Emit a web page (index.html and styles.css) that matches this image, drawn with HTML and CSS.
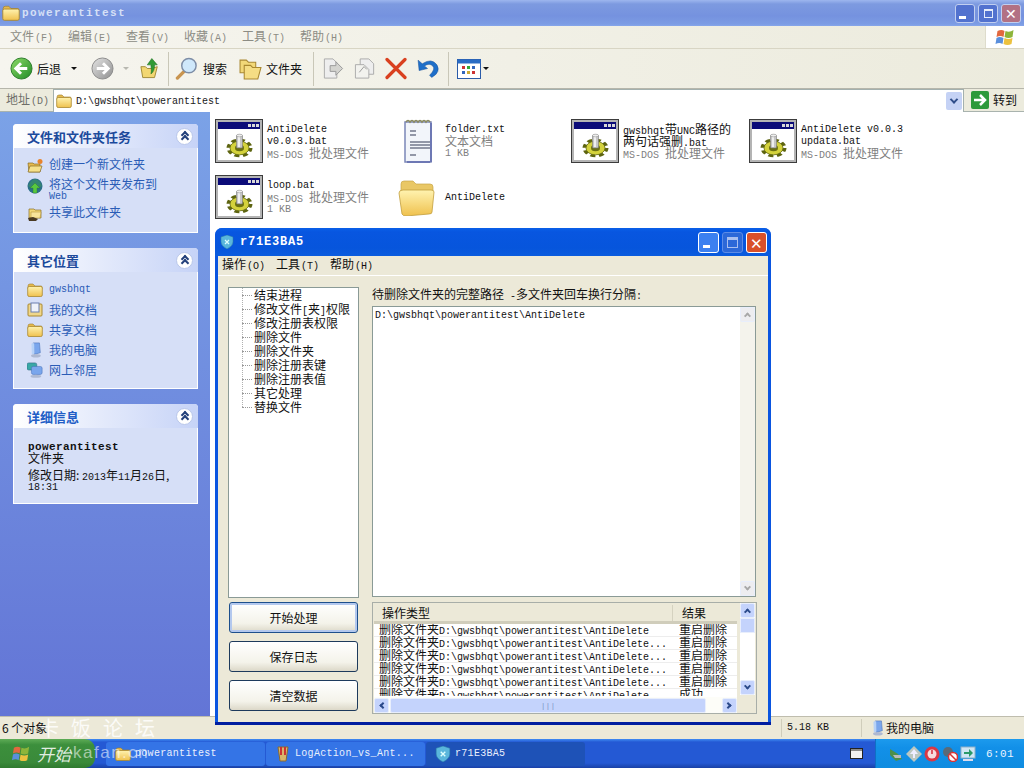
FILE: index.html
```html
<!DOCTYPE html>
<html lang="zh">
<head>
<meta charset="utf-8">
<title>powerantitest</title>
<link rel="stylesheet" href="styles.css">
</head>
<body>
<svg class="defs" aria-hidden="true">
  <defs>
    <linearGradient id="gGreen" x1="0" y1="0" x2="1" y2="1"><stop offset="0" stop-color="#8fdc6a"/><stop offset="1" stop-color="#1f8a25"/></linearGradient>
    <linearGradient id="gGrey" x1="0" y1="0" x2="1" y2="1"><stop offset="0" stop-color="#e4e4e4"/><stop offset="1" stop-color="#8f8f8f"/></linearGradient>
    <linearGradient id="gFold" x1="0" y1="0" x2="0" y2="1"><stop offset="0" stop-color="#fff3b0"/><stop offset="1" stop-color="#efc14e"/></linearGradient>
  </defs>
  <symbol id="bat" viewBox="0 0 48 44">
    <rect width="48" height="44" fill="#3c3c3c"/>
    <rect x="1" y="1" width="46" height="42" fill="#b4b4b4"/>
    <rect x="3" y="3" width="42" height="38" fill="#fff"/>
    <rect x="3" y="3" width="42" height="7" fill="#0b0b78"/>
    <rect x="33" y="5" width="3" height="3" fill="#d8d8d8"/><rect x="37" y="5" width="3" height="3" fill="#d8d8d8"/><rect x="41" y="5" width="3" height="3" fill="#d8d8d8"/>
    <g transform="translate(24.500 29) scale(1 .72)">
      <circle r="11" fill="none" stroke="#5d6410" stroke-width="4" stroke-dasharray="5 3.640"/>
      <circle r="9.500" fill="#d4d23c" stroke="#6a7012" stroke-width="1"/>
      <circle r="4.500" fill="#6a7012"/>
    </g>
    <rect x="21.500" y="16" width="6" height="13" rx="1" fill="#c6c6c6" stroke="#777" stroke-width=".6"/>
    <rect x="23" y="17" width="2" height="11" fill="#eee"/>
    <ellipse cx="24.500" cy="16.500" rx="3" ry="1.300" fill="#eee" stroke="#888" stroke-width=".5"/>
  </symbol>
  <symbol id="txt" viewBox="0 0 32 44">
    <path d="M3 3h26v40H3z" fill="#f2f5fa" stroke="#7b86b8" stroke-width="1.500"/>
    <path d="M29 4v39M28 43H5" stroke="#6d78b4" stroke-width="2" fill="none"/>
    <path d="M4 3q2-3 4 0q2-3 4 0q2-3 4 0q2-3 4 0q2-3 4 0q2-3 4 0" fill="none" stroke="#8a8a60" stroke-width="1.600"/>
    <path d="M8 12h6M8 16h6M8 23h20M8 26h20M8 29h20M8 36h6" stroke="#333b55" stroke-width="1.200"/>
  </symbol>
  <symbol id="bigfold" viewBox="0 0 38 38">
    <path d="M3 6q0-3 3-3h9l3 3h14q3 0 3 3v4H3z" fill="#e9c765" stroke="#c8a648" stroke-width=".7"/>
    <path d="M5 12h28q3 0 3 2l-2 20q0 2-3 2l-23 2q-3 0-4-2L1 15q0-3 4-3z" fill="url(#gFold)" stroke="#c29e3e" stroke-width=".8"/>
  </symbol>
  <symbol id="fold" viewBox="0 0 16 14">
    <path d="M1 3q0-2 2-2h3l2 2h6q1 0 1 1v2H1z" fill="#e5b94d" stroke="#9d7d2c" stroke-width=".6"/>
    <rect x=".7" y="3.500" width="14.600" height="10" rx="1.500" fill="url(#gFold)" stroke="#a98830" stroke-width=".8"/>
  </symbol>
  <symbol id="pc" viewBox="0 0 16 18">
    <path d="M6 1h7l1 11-7 2z" fill="#7aa6ec" stroke="#456fb8" stroke-width=".6"/>
    <path d="M4 2l3-1 .5 12-3 1z" fill="#b7d2f7"/>
    <ellipse cx="9" cy="15.500" rx="5.500" ry="2" fill="#aeb9d2"/>
  </symbol>
  <symbol id="net" viewBox="0 0 18 18">
    <rect x="0" y="1" width="11" height="8" rx="2" fill="#39a8a6" stroke="#23627e" stroke-width=".6"/>
    <rect x="5" y="5" width="12" height="9" rx="2" fill="#7aa6ec" stroke="#456fb8" stroke-width=".6"/>
    <ellipse cx="10" cy="16" rx="6" ry="1.700" fill="#aeb9d2"/>
  </symbol>
  <symbol id="shield" viewBox="0 0 14 14">
    <path d="M7 0l6 2v5q0 4-6 7Q1 11 1 7V2z" fill="#5ab6dc" stroke="#2a7aa5" stroke-width=".5"/>
    <path d="M5 5l4 4M9 5l-4 4" stroke="#dff" stroke-width="1.200"/>
  </symbol>
  <symbol id="flag" viewBox="0 0 20 20">
    <path d="M2 4q4-2 7 0l-1 6q-3-2-7 0z" fill="#e2683f"/>
    <path d="M10 4q4 2 8-1l-1 7q-4 2-8 0z" fill="#8db53a"/>
    <path d="M1 11q3-2 7 0l-1 6q-3-2-7 0z" fill="#5a8fdc"/>
    <path d="M9 11q4 2 8 0l-1 6q-4 2-8 0z" fill="#ecc13f"/>
  </symbol>
</svg>

<div class="explorer">
  <header class="xp-title">
    <svg class="title-ico"><use href="#fold"/></svg>
    <span class="xp-title-text">powerantitest</span>
    <div class="caption">
      <span class="cap cap-blue"><i class="g-min"></i></span>
      <span class="cap cap-blue"><i class="g-restore"></i></span>
      <span class="cap cap-red">✕</span>
    </div>
  </header>

  <nav class="xp-menu">
    <span class="mi">文件<span class="ac">(F)</span></span>
    <span class="mi">编辑<span class="ac">(E)</span></span>
    <span class="mi">查看<span class="ac">(V)</span></span>
    <span class="mi">收藏<span class="ac">(A)</span></span>
    <span class="mi">工具<span class="ac">(T)</span></span>
    <span class="mi">帮助<span class="ac">(H)</span></span>
    <span class="flagbox"><svg class="flag-ico"><use href="#flag"/></svg></span>
  </nav>

  <div class="toolbar">
    <svg class="tb t-back" viewBox="0 0 24 24"><circle cx="12" cy="12" r="11" fill="url(#gGreen)" stroke="#2a7a2a"/><path d="M18 12H7M11.500 6.500L6 12l5.500 5.500" fill="none" stroke="#fff" stroke-width="3"/></svg>
    <span class="tb-label l-back">后退</span><span class="drop d-back"></span>
    <svg class="tb t-fwd" viewBox="0 0 24 24"><circle cx="12" cy="12" r="11" fill="url(#gGrey)" stroke="#8a8a8a"/><path d="M6 12h11M12.500 6.500L18 12l-5.500 5.500" fill="none" stroke="#fff" stroke-width="3"/></svg>
    <span class="drop d-fwd"></span>
    <svg class="tb t-up" viewBox="0 0 22 24"><path d="M1 10h5l2 2h5l6-2-3 12H3z" fill="#f2d772" stroke="#9a8430"/><path d="M13 1l6 7h-3c0 5-1 8-4 10 1-4 0-7 0-10H8z" fill="#2f9a35" stroke="#1f6e1f" stroke-width=".6"/></svg>
    <span class="sep s1"></span>
    <svg class="tb t-search" viewBox="0 0 24 24"><path d="M9 15l-7 7" stroke="#c99550" stroke-width="3.500" stroke-linecap="round"/><circle cx="14" cy="9" r="7.500" fill="#cfe8fb" stroke="#7d8da6" stroke-width="1.500"/></svg>
    <span class="tb-label l-search">搜索</span>
    <svg class="tb t-folder" viewBox="0 0 22 22"><path d="M1 3h6l2 2h7v10H1z" fill="#f2d878" stroke="#a98830"/><path d="M5 8h6l2 2h8l-3 11H5z" fill="#f5dd84" stroke="#a98830"/></svg>
    <span class="tb-label l-folder">文件夹</span>
    <span class="sep s2"></span>
    <svg class="tb t-move" viewBox="0 0 22 24"><path d="M2 2h9l4 4v16H2z" fill="#eee" stroke="#aaa"/><path d="M8 9h6V5l7 7-7 7v-4H8z" fill="#d4d4d0" stroke="#999"/></svg>
    <svg class="tb t-copy" viewBox="0 0 24 24"><path d="M7 2h9l5 5v11H7z" fill="#eee" stroke="#aaa"/><path d="M2 8h9l5 5v9H2z" fill="#f2f2ee" stroke="#aaa"/><path d="M6 16l5-6 3 3" stroke="#999" fill="none"/></svg>
    <svg class="tb t-del" viewBox="0 0 22 22"><path d="M2 2l18 18M20 2L2 20" stroke="#d9401f" stroke-width="3.200" stroke-linecap="round"/></svg>
    <svg class="tb t-undo" viewBox="0 0 22 22"><path d="M2 3l1 10 8-2-3-2.500q5-3 8 0t-3 9l2 2q9-5 5-12-5-7-14-1z" fill="#1e6fc9" stroke="#16509a" stroke-width=".5"/></svg>
    <span class="sep s3"></span>
    <svg class="tb t-views" viewBox="0 0 24 20"><rect x=".5" y=".5" width="23" height="19" fill="#fff" stroke="#2a5ba8"/><rect x=".5" y=".5" width="23" height="4" fill="#2a6cc4"/><path d="M5 7h3v3H5z" fill="#c33"/><path d="M10 7h3v3h-3z" fill="#3a3"/><path d="M15 7h3v3h-3z" fill="#36b"/><path d="M5 12h3v3H5z" fill="#36b"/><path d="M10 12h3v3h-3z" fill="#ca3"/><path d="M15 12h3v3h-3z" fill="#c33"/></svg>
    <span class="drop d-views"></span>
  </div>

  <div class="addr">
    <span class="addr-label">地址<span class="ac">(D)</span></span>
    <div class="addr-field">
      <svg class="ico16"><use href="#fold"/></svg>
      <span class="m addr-path">D:\gwsbhqt\powerantitest</span>
      <span class="addr-drop"><i class="chev"></i></span>
    </div>
    <svg class="go-ico" viewBox="0 0 18 18"><rect width="18" height="18" rx="2" fill="#2d9a3a"/><path d="M3 9h10M9 4l5 5-5 5" fill="none" stroke="#fff" stroke-width="2.500"/></svg>
    <span class="go-text">转到</span>
  </div>

  <div class="xp-body">
    <aside class="side">
      <section class="panel p1">
        <h3 class="panel-head">文件和文件夹任务<span class="collapse"><i class="cv"></i><i class="cv"></i></span></h3>
        <ul class="panel-list">
          <li class="task"><svg class="ico16" viewBox="0 0 16 16"><path d="M1 5h5l1 1h6v8H2z" fill="#e5b94d" stroke="#8a6d24" stroke-width=".7"/><path d="M3 8h12l-2 6H1z" fill="#f6e08a" stroke="#8a6d24" stroke-width=".7"/><circle cx="13" cy="3.500" r="2.500" fill="#e8842c"/></svg><span>创建一个新文件夹</span></li>
          <li class="task task-wrap"><svg class="ico16" viewBox="0 0 16 16"><circle cx="8" cy="8" r="7.500" fill="#2b6f88"/><path d="M1 8q3-6 7-7 5 1 7 7-7 5-14 0z" fill="#3b8f6a" opacity=".7"/><path d="M8 5l5 5h-3v5H6v-5H3z" fill="#58c83e" stroke="#2a7a2a" stroke-width=".4"/></svg><span class="task-lines"><span class="tl">将这个文件夹发布到</span><span class="tl m">Web</span></span></li>
          <li class="task"><svg class="ico16" viewBox="0 0 16 16"><path d="M2 3h5l1 1h6v8H2z" fill="#f2d878" stroke="#8a6d24" stroke-width=".7"/><path d="M4 6h10l-1 6H4z" fill="#f8e49a" stroke="#a98830" stroke-width=".5"/><path d="M1 12l5-1 5 2-2 2H2z" fill="#4a3a22"/></svg><span>共享此文件夹</span></li>
        </ul>
      </section>
      <section class="panel p2">
        <h3 class="panel-head">其它位置<span class="collapse"><i class="cv"></i><i class="cv"></i></span></h3>
        <ul class="panel-list">
          <li class="place"><svg class="ico16"><use href="#fold"/></svg><span class="m">gwsbhqt</span></li>
          <li class="place"><svg class="ico16" viewBox="0 0 16 16"><rect x="1" y="2" width="14" height="12" rx="1" fill="#f0d78a" stroke="#a98830"/><rect x="4" y="1" width="8" height="9" fill="#eef2fa" stroke="#6a7fb0"/></svg><span>我的文档</span></li>
          <li class="place"><svg class="ico16"><use href="#fold"/></svg><span>共享文档</span></li>
          <li class="place"><svg class="ico16"><use href="#pc"/></svg><span>我的电脑</span></li>
          <li class="place"><svg class="ico16"><use href="#net"/></svg><span>网上邻居</span></li>
        </ul>
      </section>
      <section class="panel p3">
        <h3 class="panel-head">详细信息<span class="collapse"><i class="cv"></i><i class="cv"></i></span></h3>
        <div class="details">
          <div class="d-name">powerantitest</div>
          <div class="d-line">文件夹</div>
          <div class="d-date">修改日期: <span class="m">2013</span>年<span class="m">11</span>月<span class="m">26</span>日,</div>
          <div class="d-time m">18:31</div>
        </div>
      </section>
    </aside>

    <main class="files">
      <div class="file"><svg class="f-ico"><use href="#bat"/></svg><div class="f-text"><div class="m fn">AntiDelete</div><div class="m fn">v0.0.3.bat</div><div class="ft cj"><span class="m">MS-DOS </span>批处理文件</div></div></div>
      <div class="file"><span class="f-slot"><svg class="txt-ico"><use href="#txt"/></svg></span><div class="f-text"><div class="m fn">folder.txt</div><div class="ft cj">文本文档</div><div class="ft m">1 KB</div></div></div>
      <div class="file"><svg class="f-ico"><use href="#bat"/></svg><div class="f-text"><div class="fn cj"><span class="m">gwsbhqt</span>带<span class="m">UNC</span>路径的</div><div class="fn cj">两句话强删<span class="m">.bat</span></div><div class="ft cj"><span class="m">MS-DOS </span>批处理文件</div></div></div>
      <div class="file"><svg class="f-ico"><use href="#bat"/></svg><div class="f-text"><div class="m fn">AntiDelete v0.0.3</div><div class="m fn">updata.bat</div><div class="ft cj"><span class="m">MS-DOS </span>批处理文件</div></div></div>
      <div class="file"><svg class="f-ico"><use href="#bat"/></svg><div class="f-text"><div class="m fn">loop.bat</div><div class="ft cj"><span class="m">MS-DOS </span>批处理文件</div><div class="ft m">1 KB</div></div></div>
      <div class="file"><span class="f-slot"><svg class="bigfold-ico"><use href="#bigfold"/></svg></span><div class="f-text"><div class="m fn">AntiDelete</div></div></div>
    </main>
  </div>

  <footer class="status">
    <span class="st st-a">6 个对象</span>
    <span class="st st-b m">5.18 KB</span>
    <span class="st st-c"><svg class="ico16"><use href="#pc"/></svg>我的电脑</span>
  </footer>
</div>

<section class="dialog">
  <header class="d-title">
    <svg class="d-title-ico"><use href="#shield"/></svg>
    <span class="d-title-text">r71E3BA5</span>
    <div class="d-caption">
      <span class="dcap dcap-blue"><i class="g-min"></i></span>
      <span class="dcap dcap-dim"><i class="g-max"></i></span>
      <span class="dcap dcap-red">✕</span>
    </div>
  </header>
  <div class="d-inner">
    <nav class="d-menu">
      <span>操作<span class="ac">(O)</span></span>
      <span>工具<span class="ac">(T)</span></span>
      <span>帮助<span class="ac">(H)</span></span>
    </nav>
    <div class="d-top">
      <ul class="tree">
        <li>结束进程</li>
        <li>修改文件<span class="m">[</span>夹<span class="m">]</span>权限</li>
        <li>修改注册表权限</li>
        <li>删除文件</li>
        <li>删除文件夹</li>
        <li>删除注册表键</li>
        <li>删除注册表值</li>
        <li>其它处理</li>
        <li>替换文件</li>
      </ul>
      <div class="d-right">
        <label class="d-label">待删除文件夹的完整路径<span class="m lbl-sp"> -</span>多文件夹回车换行分隔<span class="m">:</span></label>
        <div class="area">
          <span class="m area-text">D:\gwsbhqt\powerantitest\AntiDelete</span>
          <div class="vs vs-dim">
            <span class="sb-btn"><i class="up"></i></span>
            <span class="sb-btn"><i class="down"></i></span>
          </div>
        </div>
      </div>
    </div>
    <div class="d-bottom">
      <div class="btns">
        <button class="btn btn-def">开始处理</button>
        <button class="btn">保存日志</button>
        <button class="btn">清空数据</button>
      </div>
      <div class="list">
        <div class="list-main">
          <div class="list-view">
            <div class="lh"><span class="c1">操作类型</span><span class="c2">结果</span></div>
            <div class="rows">
              <div class="lr"><span class="c1">删除文件夹<span class="m">D:\gwsbhqt\powerantitest\AntiDelete</span></span><span class="c2">重启删除</span></div>
              <div class="lr"><span class="c1">删除文件夹<span class="m">D:\gwsbhqt\powerantitest\AntiDelete...</span></span><span class="c2">重启删除</span></div>
              <div class="lr"><span class="c1">删除文件夹<span class="m">D:\gwsbhqt\powerantitest\AntiDelete...</span></span><span class="c2">重启删除</span></div>
              <div class="lr"><span class="c1">删除文件夹<span class="m">D:\gwsbhqt\powerantitest\AntiDelete...</span></span><span class="c2">重启删除</span></div>
              <div class="lr"><span class="c1">删除文件夹<span class="m">D:\gwsbhqt\powerantitest\AntiDelete...</span></span><span class="c2">重启删除</span></div>
              <div class="lr"><span class="c1">删除文件夹<span class="m">D:\gwsbhqt\powerantitest\AntiDelete...</span></span><span class="c2">成功</span></div>
            </div>
          </div>
          <div class="vs vs-list">
            <span class="sb-btn"><i class="up"></i></span>
            <span class="sb-thumb"></span>
            <span class="sb-btn sb-end"><i class="down"></i></span>
          </div>
        </div>
        <div class="hs">
          <span class="sb-btn"><i class="left"></i></span>
          <span class="hs-thumb">|||</span>
          <span class="sb-btn"><i class="right"></i></span>
        </div>
      </div>
    </div>
  </div>
</section>

<footer class="taskbar">
  <div class="start"><svg class="start-flag"><use href="#flag"/></svg><span class="start-text">开始</span></div>
  <div class="task-btn t1"><svg class="ico16"><use href="#fold"/></svg><span class="m tt">powerantitest</span></div>
  <div class="task-btn"><svg class="ico16" viewBox="0 0 16 16"><path d="M3 1l2 14h6l2-14z" fill="#d9b56a" stroke="#8a6a30"/><path d="M6 1v8M10 1v8" stroke="#c33" stroke-width="2"/></svg><span class="m tt">LogAction_vs_Ant...</span></div>
  <div class="task-btn active"><svg class="ico16"><use href="#shield"/></svg><span class="m tt">r71E3BA5</span></div>
  <span class="kbd"></span>
  <div class="tray">
    <svg class="tray-ico" viewBox="0 0 16 16"><path d="M2 3l8 5 4 5-6 2-6-6z" fill="#4c8f4c"/><path d="M5 9h8v3H7z" fill="#bbb"/></svg>
    <svg class="tray-ico" viewBox="0 0 16 16"><path d="M8 0l8 8-8 8-8-8z" fill="#bcc7c0"/><path d="M8 3l4 5H9v4H7V8H4z" fill="#eef"/></svg>
    <svg class="tray-ico" viewBox="0 0 16 16"><circle cx="8" cy="8" r="7.500" fill="#d93845"/><circle cx="8" cy="8" r="4.500" fill="#f6dde0"/><path d="M8 4v4" stroke="#d93845" stroke-width="1.600"/></svg>
    <svg class="tray-ico" viewBox="0 0 16 16"><circle cx="6" cy="6" r="5" fill="#5a6a78"/><circle cx="11" cy="11" r="4.500" fill="#fff" stroke="#d33" stroke-width="1.500"/><path d="M8 8l6 6" stroke="#d33" stroke-width="1.500"/></svg>
    <svg class="tray-ico" viewBox="0 0 16 16"><rect x="1" y="1" width="14" height="11" fill="#cfe6f5" stroke="#8fb0c8"/><path d="M4 6h5V3l4 4-4 4V8H4z" fill="#2a9a6a"/><rect x="3" y="13" width="10" height="2" fill="#dde"/></svg>
    <span class="clock m">6:01</span>
  </div>
</footer>

<div class="mark mark-cn">卡饭论坛</div>
<div class="mark mark-en">kafan.cn</div>
</body>
</html>
```
FILE: styles.css
```css
* { box-sizing: border-box; }
html, body { margin: 0; padding: 0; }
body {
  width: 1024px; height: 768px; overflow: hidden; position: relative;
  font: 12px/12px "Noto Sans CJK SC", "Liberation Sans", sans-serif;
  color: #111; background: #ece9d8;
}
ul { list-style: none; margin: 0; padding: 0; }
i { display: block; }
.defs { position: absolute; width: 0; height: 0; }
.m { font-family: "Liberation Mono", "Noto Sans CJK SC", monospace; font-size: 10px; }
.ac { font-family: "Liberation Mono", monospace; font-size: 10px; margin-left: 1px; }
.ico16 { width: 16px; height: 16px; flex: none; }

/* explorer window */
.explorer { height: 739px; display: flex; flex-direction: column; }
.xp-title {
  height: 26px; display: flex; align-items: center; padding-left: 2px;
  background: linear-gradient(#9db6ee 0, #7d9ae0 4px, #7592df 16px, #7c9ce4 24px, #86a6ea 26px);
}
.title-ico { width: 18px; height: 16px; }
.xp-title-text {
  margin-left: 2px; color: #d6e0f6; font: bold 11px/12px "Liberation Mono", monospace; letter-spacing: 1.400px;
}
.caption { margin-left: auto; display: flex; gap: 3px; padding-right: 3px; }
.cap {
  width: 20px; height: 19px; border-radius: 3px; border: 1px solid #c1cff0;
  display: flex; align-items: center; justify-content: center; color: #fff;
}
.cap-blue { background: #5272cf; }
.cap-red { background: #b27184; font-size: 14px; line-height: 14px; }
.g-min { width: 7px; height: 3px; background: #fff; margin: 8px 5px 0 0; }
.g-restore { width: 9px; height: 9px; border: 1px solid #e5ecfb; border-top-width: 2px; }
.g-max { width: 11px; height: 11px; border: 1px solid #a9bff0; border-top-width: 3px; }

.xp-menu {
  height: 23px; display: flex; align-items: center; padding-left: 10px; color: #8c8c84;
  background: linear-gradient(90deg, #f6f5ef, #ecebdd); border-bottom: 1px solid #d8d5c4;
}
.mi { width: 58px; }
.flagbox {
  margin-left: auto; width: 39px; height: 22px; background: #fff; border-left: 1px solid #dedccc;
  display: flex; align-items: center; justify-content: center;
}
.flag-ico { width: 21px; height: 20px; }

.toolbar {
  height: 40px; display: flex; align-items: center; padding-left: 10px;
  background: linear-gradient(90deg, #f6f5ef, #ecebdd); border-bottom: 1px solid #b6b6ab;
}
.tb { flex: none; height: 23px; }
.t-back { width: 23px; }
.l-back { margin-left: 4px; font-size: 12px; }
.tb-label { color: #111; }
.drop { width: 0; height: 0; border: 3px solid transparent; border-top: 3px solid #111; border-bottom: 0; flex: none; }
.d-back { margin-left: 10px; }
.t-fwd { width: 23px; margin-left: 14px; }
.d-fwd { margin-left: 9px; border-top-color: #b8b8b0; }
.t-up { width: 20px; margin-left: 11px; }
.sep { width: 1px; height: 34px; background: #c9c7b8; flex: none; }
.s1 { margin-left: 8px; }
.t-search { width: 24px; margin-left: 6px; }
.l-search { margin-left: 4px; }
.t-folder { width: 23px; margin-left: 12px; }
.l-folder { margin-left: 4px; }
.s2 { margin-left: 11px; }
.t-move { width: 22px; margin-left: 8px; }
.t-copy { width: 24px; margin-left: 9px; }
.t-del { width: 22px; margin-left: 8px; }
.t-undo { width: 23px; margin-left: 9px; }
.s3 { margin-left: 9px; }
.t-views { width: 24px; height: 20px; margin-left: 8px; }
.d-views { margin-left: 2px; }

.addr {
  height: 23px; display: flex; align-items: center; padding-left: 6px;
  background: #ecebdd; border-bottom: 1px solid #a9b3ae;
}
.addr-label { width: 47px; color: #6e6e68; }
.addr-field {
  width: 911px; height: 23px; display: flex; align-items: center; padding-left: 2px;
  background: #fff; border: 1px solid #a3b0ae; border-bottom: 0;
}
.addr-path { margin-left: 4px; color: #1a1a1a; padding-top: 2px; }
.addr-drop {
  margin-left: auto; margin-right: 1px; width: 16px; height: 18px; border-radius: 2px; background: #c5d2f5;
  display: flex; align-items: center; justify-content: center;
}
.chev { width: 6px; height: 6px; border: solid #2f4d8a; border-width: 0 2px 2px 0; transform: rotate(45deg) translate(-1px, -1px); }
.go-ico { width: 18px; height: 18px; margin-left: 7px; flex: none; }
.go-text { margin-left: 4px; }

.xp-body { flex: 1; display: flex; min-height: 0; }
.side {
  width: 210px; flex: none; padding: 12px 12px 0 13px;
  background: linear-gradient(#7ba2e7, #6375d6);
}
.panel { width: 185px; background: #d6dff7; border: 1px solid #fff; border-top: 0; border-radius: 4px 4px 0 0; margin-bottom: 15px; }
.panel-head {
  margin: 0 -1px; height: 24px; display: flex; align-items: center; justify-content: space-between;
  padding: 0 5px 0 14px; color: #215dc6; font-size: 13px; line-height: 13px; font-weight: 700;
  background: linear-gradient(90deg, #fff, #c6d3f7); border-radius: 4px 4px 0 0;
}
.p1 .panel-head, .p2 .panel-head { color: #1c4a9c; }
.collapse {
  width: 17px; height: 17px; border-radius: 50%; background: #fff; border: 1px solid #b9c7ea;
  display: flex; flex-direction: column; align-items: center; justify-content: center;
}
.cv { width: 6px; height: 6px; border: solid #23407a; border-width: 2px 0 0 2px; transform: rotate(45deg); margin-bottom: -2px; }
.panel-list { padding: 8px 0 0 13px; color: #215dc6; }
.p1 { height: 109px; }
.p2 { height: 141px; }
.p3 { height: 100px; }
.task { display: flex; align-items: flex-start; gap: 6px; min-height: 20px; padding-top: 2px; }
.task > span { line-height: 12px; color: #2a5cb6; }
.task-lines { display: flex; flex-direction: column; }
.tl { display: block; height: 12px; line-height: 12px; }
.tl.m { line-height: 14px; }
.task-wrap { min-height: 28px; }
.place { display: flex; align-items: center; gap: 6px; height: 20px; color: #2a5cb6; }
.details { padding: 13px 0 0 14px; }
.d-name { font: bold 11px/12px "Liberation Mono", monospace; letter-spacing: .4px; color: #111; height: 11px; }
.d-line { height: 11px; line-height: 11px; }
.d-date { margin-top: 6px; height: 12px; line-height: 12px; white-space: nowrap; }
.d-time { height: 12px; line-height: 14px; }

.files {
  flex: 1; background: #fff; padding: 7px 0 0 5px;
  display: grid; grid-template-columns: repeat(4, 178px); grid-auto-rows: 56px; align-content: start;
}
.file { display: flex; align-items: center; height: 44px; }
.f-ico { width: 48px; height: 44px; flex: none; }
.f-slot { width: 48px; height: 44px; flex: none; display: flex; justify-content: center; align-items: center; }
.txt-ico { width: 32px; height: 44px; margin-left: 2px; }
.bigfold-ico { width: 38px; height: 38px; margin-left: 0; }
.f-text { margin-left: 4px; padding-top: 2px; }
.fn, .ft { height: 12px; line-height: 12px; white-space: nowrap; }
.ft { color: #7f7f7f; }
.cj { line-height: 9px; }

.status {
  height: 23px; display: flex; align-items: center; background: #ece9d8; border-top: 1px solid #bfbdae;
}
.st { height: 18px; display: flex; align-items: center; }
.st-a { width: 781px; padding-left: 2px; }
.st-b { width: 80px; padding-left: 5px; border-left: 1px solid #d0cdbb; }
.st-c { padding-left: 7px; gap: 1px; border-left: 1px solid #d0cdbb; }

/* dialog */
.dialog {
  position: absolute; left: 215px; top: 228px; width: 556px; height: 497px;
  display: flex; flex-direction: column;
  background: #0a55e0; border-radius: 7px 7px 0 0; border-bottom: 3px solid #001ea0;
  padding: 0 3px;
}
.d-title {
  height: 28px; margin: 0 -3px; display: flex; align-items: center; padding-left: 5px; flex: none;
  background: linear-gradient(#0a5fe8, #0856e0 4px, #0655dc 20px, #0a5cde); border-radius: 7px 7px 0 0;
}
.d-title-ico { width: 14px; height: 14px; }
.d-title-text { margin-left: 6px; color: #fff; font: bold 12px/12px "Liberation Mono", monospace; letter-spacing: .8px; }
.d-caption { margin-left: auto; display: flex; gap: 3px; padding-right: 4px; }
.dcap {
  width: 21px; height: 21px; border-radius: 3px; border: 1px solid #fff;
  display: flex; align-items: center; justify-content: center; color: #fff;
}
.dcap-blue { background: #3c80f0; }
.dcap-dim { background: #2c68d8; border-color: #5d8ce6; }
.dcap-red { background: #d9502a; font-size: 15px; line-height: 15px; }
.d-inner { flex: 1; background: #ece9d8; display: flex; flex-direction: column; padding: 0 10px; min-height: 0; }
.d-menu { height: 20px; margin: 0 -10px; padding-left: 4px; display: flex; align-items: center; gap: 11px; border-bottom: 1px solid #fff; flex: none; }
.d-top { height: 322px; display: flex; gap: 13px; padding-top: 11px; flex: none; }
.tree {
  width: 131px; background: #fff; border: 1px solid #8a9a96; padding: 0 0 0 25px;
  background-image: linear-gradient(#b0b0b0 50%, transparent 50%);
  background-size: 1px 2px; background-repeat: repeat-y; background-position: 13px 0;
  position: relative;
}
.tree::after { content: ""; position: absolute; left: 13px; top: 120px; bottom: 0; width: 1px; background: #fff; }
.tree li { height: 14px; line-height: 14px; position: relative; white-space: nowrap; }
.tree li::before {
  content: ""; position: absolute; left: -12px; top: 7px; width: 10px; border-top: 1px dotted #999;
}
.d-right { width: 385px; display: flex; flex-direction: column; }
.d-label { height: 19px; line-height: 14px; white-space: pre; }
.area {
  height: 291px; width: 384px; background: #fff; border: 1px solid #8a9a96; display: flex; justify-content: space-between;
}
.area-text { padding: 4px 0 0 2px; line-height: 10px; }
.vs { width: 15px; flex: none; display: flex; flex-direction: column; }
.vs-dim { background: #f4f3ec; justify-content: space-between; }
.vs-dim .sb-btn { background: #ededf0; }
.sb-btn {
  width: 15px; height: 15px; flex: none; background: #c4d3fc; border: 1px solid #e8eefc; border-radius: 2px;
  display: flex; align-items: center; justify-content: center;
}
.up, .down, .left, .right { width: 5px; height: 5px; border: solid #2b4a8a; border-width: 2px 0 0 2px; }
.up { transform: rotate(45deg) translate(1px, 1px); }
.down { transform: rotate(225deg) translate(1px, 1px); }
.left { transform: rotate(-45deg) translate(1px, 1px); }
.right { transform: rotate(135deg) translate(1px, 1px); }
.vs-dim .up, .vs-dim .down { border-color: #a8a8a8; }

.d-bottom { flex: 1; display: flex; gap: 14px; padding-top: 4px; min-height: 0; }
.btns { width: 130px; display: flex; flex-direction: column; gap: 8px; padding-left: 1px; }
.btn {
  width: 129px; height: 31px; flex: none; padding: 0; border: 1px solid #1d3a5c; border-radius: 3px;
  background: linear-gradient(#fff, #f4f3ea 70%, #dcd8c8); font: inherit; color: #111;
}
.btn-def { border-color: #1d4f8c; box-shadow: inset 0 0 0 2px #b3c8ee; }
.list { width: 385px; height: 112px; background: #ece9d8; border: 1px solid #a8aea8; display: flex; flex-direction: column; padding: 0 1px; flex: none; }
.list-main { flex: 1; display: flex; min-height: 0; }
.list-view { flex: 1; overflow: hidden; background: #fff; }
.lh {
  height: 21px; display: flex; align-items: center; background: #ece9d8; border-bottom: 3px solid #d0cdbb; padding-top: 1px; flex: none;
}
.lh .c1 { width: 298px; padding-left: 8px; }
.lh .c2 { padding-left: 9px; border-left: 1px solid #d5d2c0; height: 16px; line-height: 16px; }
.rows { height: 72px; overflow: hidden; }
.lr { height: 13px; display: flex; line-height: 10px; border-bottom: 1px solid #ededed; white-space: nowrap; }
.lr .c1 { width: 298px; padding-left: 5px; }
.lr .c2 { padding-left: 7px; }
.vs-list { width: 15px; margin-left: 3px; background: #fff; height: 92px; }
.sb-thumb { height: 15px; background: #c4d3fc; border: 1px solid #e8eefc; }
.sb-end { margin-top: auto; }
.hs { height: 16px; display: flex; align-items: center; background: #fdfdf8; margin-right: 18px; }
.hs-thumb {
  width: 316px; height: 15px; margin: 0 1px; background: #c4d3fc; border: 1px solid #e8eefc; border-radius: 2px;
  font: 8px/13px "Liberation Mono", monospace; color: #7f93c8; text-align: center;
}
.hs .sb-btn:last-child { margin-left: auto; }

/* taskbar */
.taskbar {
  height: 29px; display: flex; align-items: center;
  background: linear-gradient(#3f8cf3 0, #2459d4 3px, #2459d4 24px, #1941a5 29px);
}
.start {
  width: 95px; height: 29px; display: flex; align-items: center; padding-left: 12px; flex: none;
  background: linear-gradient(#5eac56, #3c8f3c 20%, #3a8a3a 80%, #2f7a2f); border-radius: 0 10px 10px 0;
}
.start-flag { width: 19px; height: 19px; }
.start-text { margin-left: 6px; color: rgba(255, 255, 255, .85); font-size: 17px; line-height: 17px; font-style: italic; }
.task-btn {
  width: 159px; height: 24px; margin-left: 1px; display: flex; align-items: center; gap: 4px; padding-left: 9px;
  background: #3474e6; border-radius: 3px; color: #eaf0fd; flex: none;
}
.t1 { margin-left: 11px; }
.task-btn.active { background: #1e52b7; }
.tt { letter-spacing: .3px; }
.kbd {
  margin-left: auto; margin-right: 12px; width: 13px; height: 11px; background: #f0f0f0; border: 1px solid #222;
  box-shadow: inset 0 2px 0 #888; flex: none;
}
.tray {
  width: 149px; height: 29px; display: flex; align-items: center; padding-left: 12px; gap: 2px; flex: none;
  background: linear-gradient(#1c9aed, #1290e8 30%, #0f8ce0); border-left: 1px solid #0f6fc4;
}
.tray-ico { width: 16px; height: 16px; }
.clock { margin-left: 8px; color: #eaf4ff; font-size: 11px; letter-spacing: .4px; }

.mark { position: absolute; color: rgba(255, 255, 255, .85); pointer-events: none; }
.mark-cn { left: 39px; top: 718px; font-size: 20px; line-height: 20px; letter-spacing: 12px; }
.mark-en { left: 73px; top: 744px; font: 17px/17px "Liberation Sans", sans-serif; letter-spacing: 1.500px; color: rgba(255,255,255,.55); }
```
